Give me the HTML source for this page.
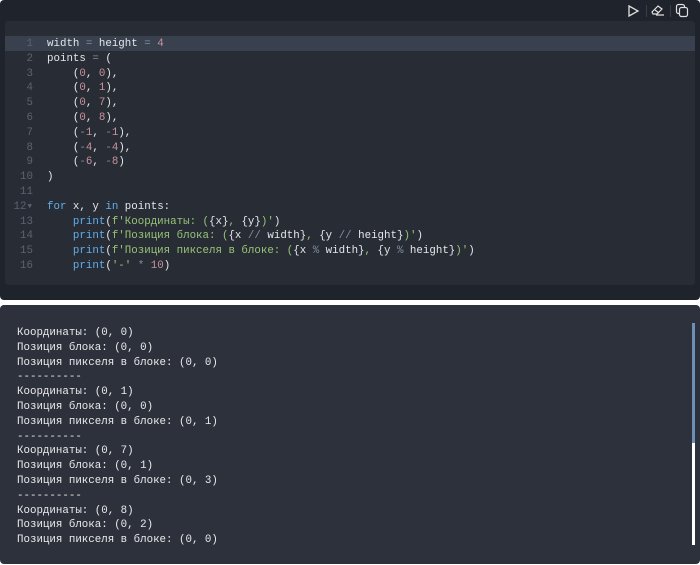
<!DOCTYPE html>
<html><head><meta charset="utf-8"><style>
body{margin:0;width:700px;height:565px;background:#fff;overflow:hidden;font-family:"Liberation Mono","DejaVu Sans Mono",monospace}
.top{position:absolute;left:0;top:0;width:700px;height:300px;background:#1f232b;border-radius:4px}
.ed{position:absolute;left:5px;top:21px;width:690px;height:264px;background:#282c34;border-radius:3px}
.act{position:absolute;left:0;top:15px;width:690px;height:15px;background:#38414d}
.code{position:absolute;left:0;top:16px;font-size:10.8px;line-height:14.8px;color:#e4e7ec;white-space:pre}
.ln{display:inline-block;width:28px;text-align:right;color:#5c6370;margin-right:14px}
.k{color:#61afef}.s{color:#98c379}.n{color:#c9919f}.o{color:#7f8ea3}.kw{color:#61afef}
.out{position:absolute;left:0;top:305px;width:700px;height:259px;background:#2c313c;border-radius:4px}
.otext{position:absolute;left:17px;top:21px;font-size:10.8px;line-height:14.8px;color:#eaeaea;white-space:pre}
.sb{position:absolute;left:692px;top:18px;width:3px;height:222px;background:#fff}
.sb div{height:120px;background:#6b8fb5}
</style></head><body>
<div class="top">
<svg style="position:absolute;left:626px;top:4px" width="14" height="14" viewBox="0 0 14 14"><path d="M3 2 L12 7 L3 12 Z" fill="none" stroke="#e0e0e0" stroke-width="1.3"/></svg>
<div style="position:absolute;left:646px;top:5px;width:1px;height:12px;background:#3a3f48"></div>
<svg style="position:absolute;left:650px;top:3px" width="16" height="14" viewBox="0 0 16 14"><path d="M2 9 L8 3 L12 6 L7 11 H3 Z M5 7 L9 10 M6 12 H14" fill="none" stroke="#e0e0e0" stroke-width="1.2"/></svg>
<div style="position:absolute;left:670px;top:5px;width:1px;height:12px;background:#3a3f48"></div>
<svg style="position:absolute;left:675px;top:3px" width="15" height="15" viewBox="0 0 15 15"><rect x="1.5" y="1.5" width="8" height="9" rx="2" fill="none" stroke="#e0e0e0" stroke-width="1.2"/><rect x="4.5" y="4.5" width="8" height="9" rx="2" fill="#1f232b" stroke="#e0e0e0" stroke-width="1.2"/></svg>
<div class="ed"><div class="act"></div>
<div class="code"><span class="ln">1</span>width <span class="o">=</span> height <span class="o">=</span> <span class="n">4</span>
<span class="ln">2</span>points <span class="o">=</span> (
<span class="ln">3</span>    (<span class="n">0</span>, <span class="n">0</span>),
<span class="ln">4</span>    (<span class="n">0</span>, <span class="n">1</span>),
<span class="ln">5</span>    (<span class="n">0</span>, <span class="n">7</span>),
<span class="ln">6</span>    (<span class="n">0</span>, <span class="n">8</span>),
<span class="ln">7</span>    (<span class="o">-</span><span class="n">1</span>, <span class="o">-</span><span class="n">1</span>),
<span class="ln">8</span>    (<span class="o">-</span><span class="n">4</span>, <span class="o">-</span><span class="n">4</span>),
<span class="ln">9</span>    (<span class="o">-</span><span class="n">6</span>, <span class="o">-</span><span class="n">8</span>)
<span class="ln">10</span>)
<span class="ln">11</span>
<span class="ln">12▾</span><span class="kw">for</span> x, y <span class="kw">in</span> points:
<span class="ln">13</span>    <span class="k">print</span>(<span class="s">f'Координаты: (</span>{x}<span class="s">, </span>{y}<span class="s">)'</span>)
<span class="ln">14</span>    <span class="k">print</span>(<span class="s">f'Позиция блока: (</span>{x <span class="o">//</span> width}<span class="s">, </span>{y <span class="o">//</span> height}<span class="s">)'</span>)
<span class="ln">15</span>    <span class="k">print</span>(<span class="s">f'Позиция пикселя в блоке: (</span>{x <span class="o">%</span> width}<span class="s">, </span>{y <span class="o">%</span> height}<span class="s">)'</span>)
<span class="ln">16</span>    <span class="k">print</span>(<span class="s">'-'</span> <span class="o">*</span> <span class="n">10</span>)</div>
</div></div>
<div class="out">
<div class="otext">Координаты: (0, 0)
Позиция блока: (0, 0)
Позиция пикселя в блоке: (0, 0)
----------
Координаты: (0, 1)
Позиция блока: (0, 0)
Позиция пикселя в блоке: (0, 1)
----------
Координаты: (0, 7)
Позиция блока: (0, 1)
Позиция пикселя в блоке: (0, 3)
----------
Координаты: (0, 8)
Позиция блока: (0, 2)
Позиция пикселя в блоке: (0, 0)</div>
<div class="sb"><div></div></div>
</div>
</body></html>
